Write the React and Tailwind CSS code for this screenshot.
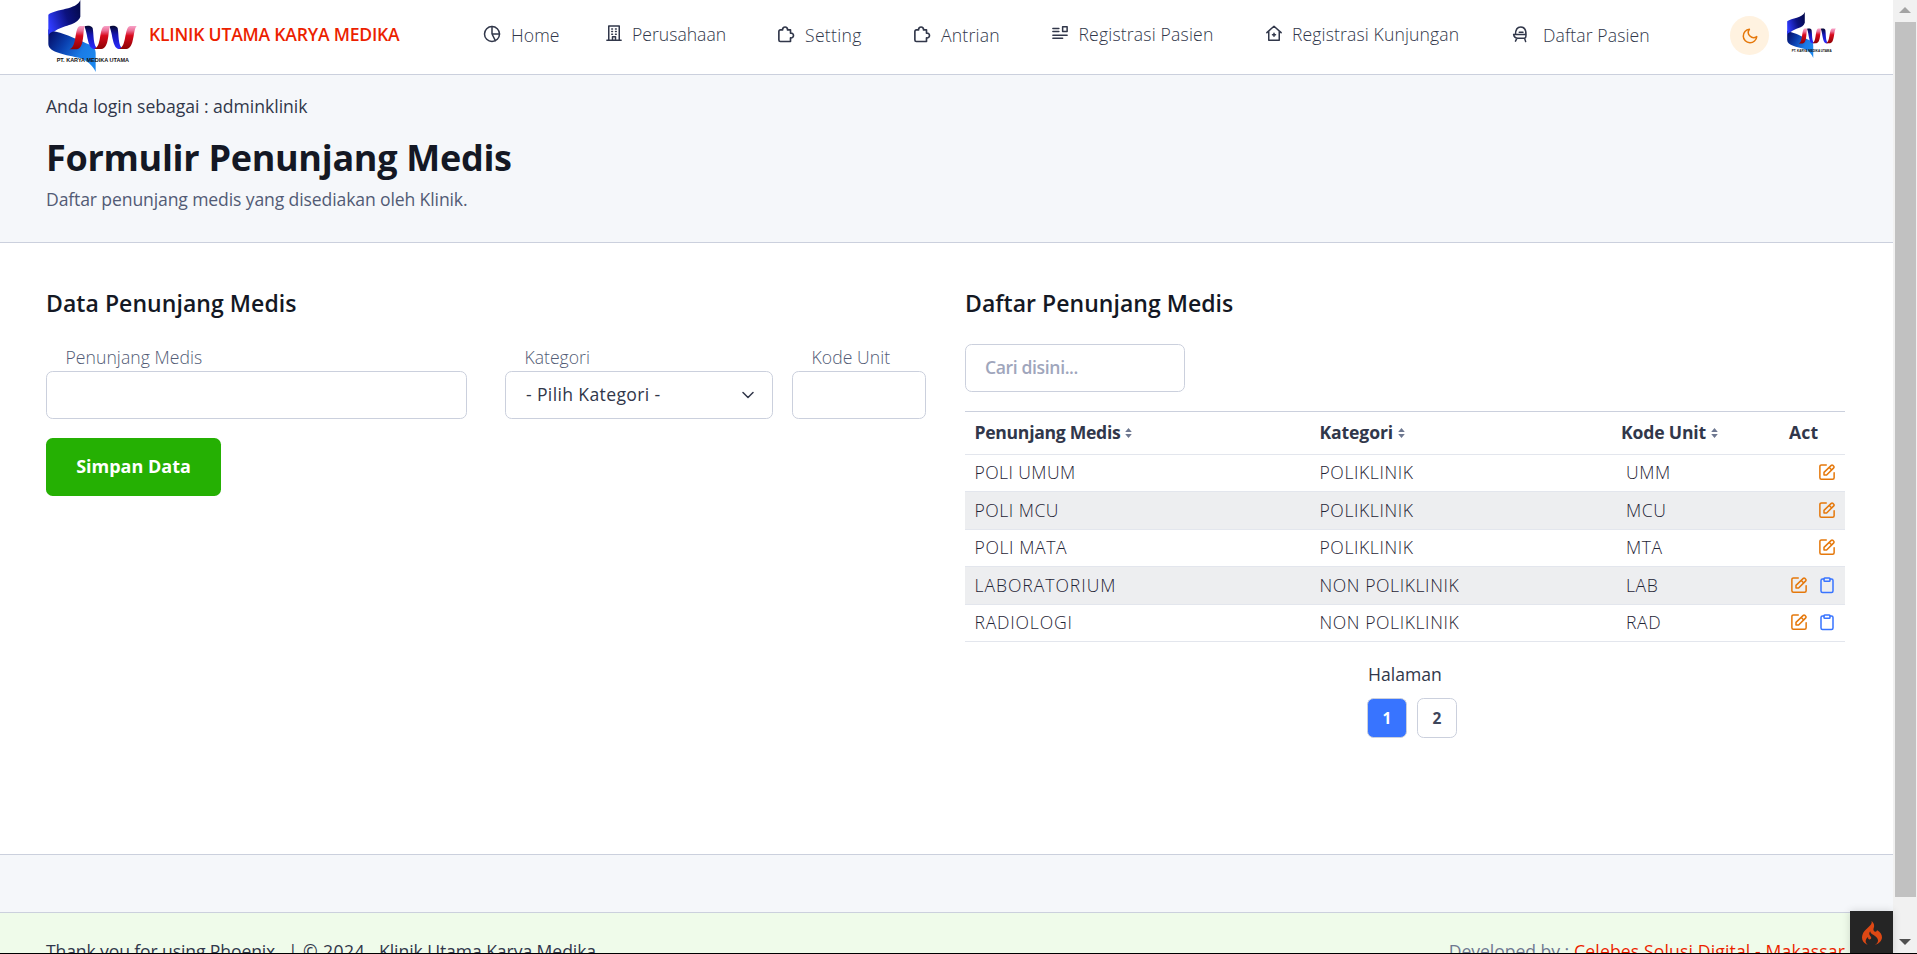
import { SiCodeigniter } from "react-icons/si";

function Logo({ id, className }) {
  const red = `url(#${id}-red)`;
  const blue = `url(#${id}-blue)`;
  return (
    <svg className={className} viewBox="54 0 267 216" preserveAspectRatio="none">
      <defs>
        <linearGradient id={`${id}-top`} x1="0" y1="0.6" x2="1" y2="0.2">
          <stop offset="0" stopColor="#2f3bff" />
          <stop offset="0.55" stopColor="#0c1280" />
          <stop offset="1" stopColor="#040a4c" />
        </linearGradient>
        <linearGradient id={`${id}-tail`} x1="0" y1="0" x2="1" y2="0.6">
          <stop offset="0" stopColor="#03055c" />
          <stop offset="0.4" stopColor="#0a3fae" />
          <stop offset="0.75" stopColor="#1a7be6" />
          <stop offset="1" stopColor="#1b86ee" />
        </linearGradient>
        <linearGradient id={`${id}-red`} x1="0" y1="0" x2="0" y2="1">
          <stop offset="0" stopColor="#f7a3c8" />
          <stop offset="0.2" stopColor="#ec6f96" />
          <stop offset="0.42" stopColor="#d90a1c" />
          <stop offset="1" stopColor="#8c0204" />
        </linearGradient>
        <linearGradient id={`${id}-blue`} x1="0" y1="0" x2="0" y2="1">
          <stop offset="0" stopColor="#05072e" />
          <stop offset="0.4" stopColor="#1416b4" />
          <stop offset="1" stopColor="#2a2cff" />
        </linearGradient>
      </defs>
      <path d="M55 88C62 92 70 94 78 95C110 102 150 122 180 134C192 140 197 148 197 158V216C190 198 172 182 150 174C110 165 55 158 55 132Z" fill={`url(#${id}-tail)`} />
      <path d="M55 44C78 26 140 30 151 0V50C140 78 98 74 74 94C62 96 55 102 55 112Z" fill={`url(#${id}-top)`} />
      <path d="M163 79C170 76 184 76 188 84C192 104 188 138 204 147H190C172 142 174 104 163 79Z" fill={blue} />
      <path d="M238 79C245 76 259 76 263 84C267 104 263 138 279 147H265C247 142 249 104 238 79Z" fill={blue} />
      <path d="M150 78H165C157 90 165 146 140 148H118C142 142 132 82 150 78Z" fill={red} />
      <path d="M224 78H241C233 90 239 146 214 147H192C216 142 206 82 224 78Z" fill={red} />
      <path d="M300 78H320C308 90 314 146 289 147H266C291 142 282 82 300 78Z" fill={red} />
      <text x="80" y="186" textLength="217" lengthAdjust="spacingAndGlyphs" fontSize="16.5" fontWeight="700" fontFamily="Liberation Sans, Arial, sans-serif" fill="#111">
        PT. KARYA MEDIKA UTAMA
      </text>
    </svg>
  );
}

function Icon({ children, className = "", stroke = 2 }) {
  return (
    <svg className={`block h-[18px] w-[18px] shrink-0 ${className}`} viewBox="0 0 24 24" fill="none" stroke="currentColor" strokeWidth={stroke} strokeLinecap="round" strokeLinejoin="round">
      {children}
    </svg>
  );
}

const PieIcon = () => (
  <Icon className="mt-[2px]">
    <circle cx="12" cy="12" r="10" />
    <path d="M12 2v10h10M12 12l4.5 8.8" />
  </Icon>
);
const BuildingIcon = () => (
  <Icon className="mt-[2px]">
    <path d="M5 21V2.5h14V21M2.5 21.5h19M10 21v-4h4v4" />
    <path d="M9 6.5h1M14 6.5h1M9 10h1M14 10h1M9 13.5h1M14 13.5h1" />
  </Icon>
);
const PuzzleIcon = () => (
  <Icon className="mt-[2px]" stroke={2.2}>
    <path d="M4.500 22a2 2 0 0 1-2-2V8.500a2 2 0 0 1 2-2h3a3.300 3.300 0 1 1 6.500 0H18v4.500a3.200 3.200 0 1 1 0 6.200V22Z" />
  </Icon>
);
const ListIcon = () => (
  <Icon className="mt-[2px]">
    <path d="M2.500 6h8M2.500 10h8M2.500 15h19M2.500 19h13M15.500 3.500h6v6.500h-6z" />
  </Icon>
);
const ClinicIcon = () => (
  <Icon className="mt-[2px]">
    <path d="M2.500 11.500L12 3l9.500 8.500M5 9.800V21.500h14V9.800M12 12.300v4M10 14.300h4" />
  </Icon>
);
const ChairIcon = () => (
  <Icon className="mt-[2px]">
    <path d="M6 12.500C6 6 8.500 2.500 13 2.500S20 6 20 12.500M3.500 12.500H20M3.500 12.500C4 16.500 6 17.500 9 17.500h9c1.500 0 2-1 2-5M8 17.500L6 21.500M18 17.500l1.500 4.500M11 9.500h5" />
  </Icon>
);
const EditIcon = () => (
  <Icon className="text-[#e5780b]">
    <path d="M11 2.500H4.500a2 2 0 0 0-2 2v15a2 2 0 0 0 2 2h15a2 2 0 0 0 2-2V13" />
    <path d="M17.700 3.200a1.500 1.500 0 0 1 2.100 0l1.200 1.200a1.500 1.500 0 0 1 0 2.100L11.500 16H8v-3.500zM15 6l3.300 3.300" />
  </Icon>
);
const ClipboardIcon = () => (
  <Icon className="text-[#3874ff]">
    <path d="M8 4H6a2 2 0 0 0-2 2v14a2 2 0 0 0 2 2h12a2 2 0 0 0 2-2V6a2 2 0 0 0-2-2h-2" />
    <path d="M9 2.500h6a1 1 0 0 1 1 1V6a1 1 0 0 1-1 1H9a1 1 0 0 1-1-1V3.500a1 1 0 0 1 1-1z" />
  </Icon>
);

const NAV = [
  { label: "Home", icon: PieIcon, box: "w-[122px]", text: "ml-[10px] tracking-[0.1px]" },
  { label: "Perusahaan", icon: BuildingIcon, box: "w-[172px] -mt-px", text: "ml-[9px]" },
  { label: "Setting", icon: PuzzleIcon, box: "w-[136px]", text: "ml-[10px] tracking-[0.3px]" },
  { label: "Antrian", icon: PuzzleIcon, box: "w-[138px]", text: "ml-[10px] tracking-[0.2px]" },
  { label: "Registrasi Pasien", icon: ListIcon, box: "w-[214px] -mt-px", text: "ml-[9.5px] tracking-[0.17px]" },
  { label: "Registrasi Kunjungan", icon: ClinicIcon, box: "w-[246px] -mt-px", text: "ml-[9px] tracking-[0.12px]" },
  { label: "Daftar Pasien", icon: ChairIcon, box: "w-[219px]", text: "ml-[14px] tracking-[0.1px]" },
];

const ROWS = [
  { name: "POLI UMUM", cat: "POLIKLINIK", code: "UMM", h: "h-[37px]", track: "tracking-[0.4px]", clip: false },
  { name: "POLI MCU", cat: "POLIKLINIK", code: "MCU", h: "h-[38px] bg-[#edeef0]", track: "tracking-[0.5px]", clip: false },
  { name: "POLI MATA", cat: "POLIKLINIK", code: "MTA", h: "h-[37px]", track: "tracking-[0.6px]", clip: false },
  { name: "LABORATORIUM", cat: "NON POLIKLINIK", code: "LAB", h: "h-[38px] bg-[#edeef0]", track: "tracking-[0.95px]", clip: true },
  { name: "RADIOLOGI", cat: "NON POLIKLINIK", code: "RAD", h: "h-[37px]", track: "tracking-[0.8px]", clip: true },
];

function Sort() {
  return (
    <svg className="mb-[2px] ml-[5px] inline-block h-[10px] w-[7px]" viewBox="0 0 7 10" fill="#6e7891">
      <path d="M3.500 0L6.800 4H.2zM3.500 10L.2 6h6.600z" />
    </svg>
  );
}

function Field({ label, width, track, children }) {
  return (
    <div className={`flex flex-col ${width}`}>
      <label className={`pl-[19.5px] font-light text-[#525b75] ${track}`}>{label}</label>
      <div className="mt-[2px] flex h-12 items-center justify-between rounded-[6.6px] border border-[#cbd0dd] bg-white pr-[18px] pl-[20px]">{children}</div>
    </div>
  );
}

export default function App() {
  return (
    <div className="relative flex h-[954px] w-[1917px] overflow-hidden bg-white text-[17.6px] leading-[24px] font-normal whitespace-nowrap text-[#31374a] [font-family:'Open_Sans','Noto_Sans',sans-serif]">
      <div className="flex w-[1893px] shrink-0 flex-col">
        <header className="flex h-[75px] shrink-0 items-start border-b border-[#cbd0dd] pl-[48px]">
          <Logo id="brand" className="block h-[72px] w-[89px] shrink-0" />
          <div className="ml-[12px] w-[334px] shrink-0 pt-[22px] font-semibold tracking-[-0.22px] text-[#ec1f00]">KLINIK UTAMA KARYA MEDIKA</div>
          <nav className="flex shrink-0 items-start pt-[23px]">
            {NAV.map(({ label, icon: NavIcon, box, text }) => (
              <a key={label} className={`flex shrink-0 items-start ${box}`}>
                <NavIcon />
                <span className={`font-light ${text}`}>{label}</span>
              </a>
            ))}
          </nav>
          <div className="mt-4 flex h-[39px] w-[39px] shrink-0 items-center justify-center rounded-full bg-[#fff2e0] text-[#e5780b]">
            <Icon className="h-[18px] w-[18px]">
              <path d="M21 12.790A9 9 0 1 1 11.210 3 7 7 0 0 0 21 12.790z" />
            </Icon>
          </div>
          <Logo id="avatar" className="mt-[12px] ml-[18px] block h-[46px] w-[49px] shrink-0" />
        </header>

        <section className="h-[168px] shrink-0 border-b border-[#cbd0dd] bg-[#f5f7fa] pt-[19px] pl-[46px]">
          <p className="tracking-[-0.03px]">Anda login sebagai : adminklinik</p>
          <h1 className="mt-[16px] text-[36px] leading-[48px] font-bold tracking-[-0.3px] text-[#141824]">Formulir Penunjang Medis</h1>
          <p className="mt-[5px] tracking-[-0.13px] text-[#525b75]">Daftar penunjang medis yang disediakan oleh Klinik.</p>
        </section>

        <main className="flex h-[612px] shrink-0 gap-[39px] border-b border-[#cbd0dd] bg-white pt-[46px] pl-[46px]">
          <div className="w-[880px]">
            <h2 className="text-[23px] leading-[28px] font-semibold tracking-[0.06px] text-[#141824]">Data Penunjang Medis</h2>
            <div className="mt-[28px] flex">
              <Field label="Penunjang Medis" width="w-[421px] mr-[38px]" track="tracking-[0.05px]" />
              <Field label="Kategori" width="w-[268px] mr-[19px]" track="">
                <span className="-mt-[3px] font-medium tracking-[0.35px]">- Pilih Kategori -</span>
                <svg className="h-[8px] w-[12px]" viewBox="0 0 12 8" fill="none" stroke="#31374a" strokeWidth="1.500" strokeLinecap="round" strokeLinejoin="round">
                  <path d="M1 1.500l5 5 5-5" />
                </svg>
              </Field>
              <Field label="Kode Unit" width="w-[134px]" track="tracking-[0.05px]" />
            </div>
            <button className="mt-[19px] flex h-[58px] w-[175px] items-center justify-center rounded-[6.6px] bg-[#25b003] pb-[2px] text-[18px] font-bold text-white">Simpan Data</button>
          </div>

          <div className="w-[880px]">
            <h2 className="text-[23px] leading-[28px] font-semibold tracking-[0.03px] text-[#141824]">Daftar Penunjang Medis</h2>
            <div className="mt-[27px] flex h-12 w-[220px] items-center rounded-[6.6px] border border-[#cbd0dd] pb-[3px] pl-[19px] font-semibold tracking-[-0.38px] text-[#9fa6bc]">Cari disini...</div>

            <div className="mt-[19px]">
              <div className="grid h-[44px] grid-cols-[345px_302px_168px_65px] items-center border-t border-b border-t-[#cbd0dd] border-b-[#e3e6ed] pb-[2px] font-bold">
                <div className="pl-[9.500px] tracking-[-0.3px]">Penunjang Medis<Sort /></div>
                <div className="pl-[9.500px] tracking-[-0.13px]">Kategori<Sort /></div>
                <div className="pl-[9px] tracking-[-0.17px]">Kode Unit<Sort /></div>
                <div className="pl-[9px] tracking-[0.2px]">Act</div>
              </div>
              {ROWS.map((r) => (
                <div key={r.name} className={`grid grid-cols-[345px_302px_168px_65px] items-center border-b border-[#e3e6ed] pb-[2px] font-light text-[#1f2536] ${r.h}`}>
                  <div className={`pl-[9.500px] ${r.track}`}>{r.name}</div>
                  <div className="pl-[9.500px] tracking-[0.58px]">{r.cat}</div>
                  <div className="pl-[14px] tracking-[0.6px]">{r.code}</div>
                  <div className="flex justify-end gap-[10px] pr-[9.500px]">
                    <EditIcon />
                    {r.clip && <ClipboardIcon />}
                  </div>
                </div>
              ))}
            </div>

            <div className="mt-[20px] ml-[403px]">
              <div>Halaman</div>
              <div className="mt-[12px] -ml-px flex gap-[10px] text-[15.500px] font-bold">
                <span className="flex h-10 w-10 items-center justify-center rounded-[6.6px] border border-[#cbd0dd] bg-[#3874ff] text-white">1</span>
                <span className="flex h-10 w-10 items-center justify-center rounded-[6.6px] border border-[#cbd0dd] bg-white text-[#3e465b]">2</span>
              </div>
            </div>
          </div>
        </main>

        <div className="h-[58px] shrink-0 border-b border-[#cbd0dd] bg-[#f5f7fa]" />
        <footer className="flex h-[60px] shrink-0 justify-between bg-[#effbea] pt-[26px] pr-[48px] pl-[46px]">
          <div className="flex">
            <span className="w-[242px] tracking-[-0.13px]">Thank you for using Phoenix</span>
            <span className="w-[15px]">|</span>
            <span className="w-[76px] tracking-[0.4px]">© 2024</span>
            <span className="tracking-[-0.08px]">Klinik Utama Karya Medika</span>
          </div>
          <div className="flex">
            <span className="mr-[5px] tracking-[-0.05px] text-[#6e7891]">Developed by :</span>
            <span className="tracking-[0.13px] text-[#ec1f00]">Celebes Solusi Digital - Makassar</span>
          </div>
        </footer>
      </div>

      <div className="flex w-6 shrink-0 flex-col items-center justify-between bg-[#f1f1f1] pb-[9px]">
        <div className="flex h-[22px] items-center">
          <svg className="-mt-[2px] h-[6px] w-[12px]" viewBox="0 0 12 6" fill="#a3a3a3"><path d="M6 0l6 6H0z" /></svg>
        </div>
        <div className="mb-auto h-[875px] w-[21px] bg-[#c1c1c1]" />
        <svg className="h-[6px] w-[12px]" viewBox="0 0 12 6" fill="#505050"><path d="M6 6L0 0h12z" /></svg>
      </div>

      <div className="absolute top-[911px] left-[1850px] flex h-[43px] w-[43px] items-center justify-center bg-[#252525] text-[#dd4814] shadow-[0_0_8px_rgba(0,0,0,0.15)]">
        <SiCodeigniter className="h-[24px] w-[24px]" />
      </div>
      <div className="absolute bottom-0 left-0 h-px w-full bg-black" />
    </div>
  );
}
